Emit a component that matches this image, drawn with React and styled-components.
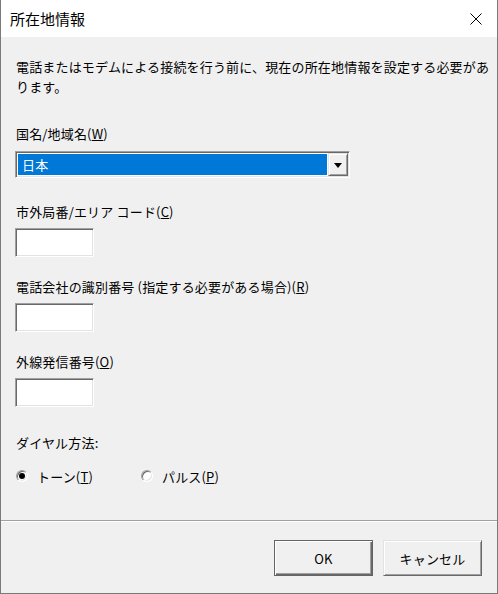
import React from 'react';
import styled, { createGlobalStyle } from 'styled-components';

const GlobalStyle = createGlobalStyle`
  html, body {
    margin: 0;
    padding: 0;
    background: #f0f0f0;
  }
  body {
    font-family: "Noto Sans CJK JP", "Noto Sans", sans-serif;
    font-size: 13px;
    letter-spacing: 0.17px;
    color: #000;
  }
`;

const Window = styled.div`
  width: 498px;
  height: 594px;
  box-sizing: border-box;
  display: flex;
  flex-direction: column;
  background: #f0f0f0;
  border: 1px solid #7a7a7a;
  border-top: none;
`;

const TitleBar = styled.div`
  height: 37px;
  flex-shrink: 0;
  background: #fff;
  display: flex;
  align-items: center;
  justify-content: space-between;
`;

const TitleText = styled.div`
  padding-left: 9px;
  font-size: 15px;
  letter-spacing: 0;
  line-height: 20px;
  margin-top: 1px;
`;

const CloseButton = styled.div`
  width: 42px;
  height: 37px;
  display: flex;
  align-items: center;
  justify-content: center;
  padding-top: 1px;
  box-sizing: border-box;
`;

const Body = styled.div`
  flex: 1;
  padding: 20px 14px 0 14px;
`;

const Message = styled.div`
  line-height: 20px;
  padding-left: 1px;
  white-space: nowrap;
`;

const Section = styled.div`
  margin-top: ${({ $top }) => $top}px;
`;

const Label = styled.div`
  line-height: 20px;
  padding-left: 1px;
  margin-bottom: ${({ $gap }) => $gap}px;
  white-space: nowrap;
`;

const sunken = `
  box-sizing: border-box;
  border: 1px solid;
  border-color: #a0a0a0 #fff #fff #a0a0a0;
  box-shadow: inset 1px 1px 0 #696969, inset -1px -1px 0 #e3e3e3;
  background: #fff;
`;

const ComboBox = styled.div`
  ${sunken}
  width: 335px;
  height: 27px;
  padding: 1px;
  display: flex;
`;

const Selection = styled.div`
  flex: 1;
  margin: 1px;
  background: #0078d7;
  color: #fff;
  line-height: 21px;
  padding-left: 4px;
`;

const DropButton = styled.div`
  width: 20px;
  box-sizing: border-box;
  background: #f0f0f0;
  border: 1px solid;
  border-color: #e3e3e3 #696969 #696969 #e3e3e3;
  box-shadow: inset 1px 1px 0 #fff, inset -1px -1px 0 #a0a0a0;
  display: flex;
  align-items: center;
  justify-content: center;
`;

const Arrow = styled.div`
  width: 0;
  height: 0;
  border-left: 4px solid transparent;
  border-right: 4px solid transparent;
  border-top: 5px solid #000;
  margin-top: 1px;
`;

const TextBox = styled.div`
  ${sunken}
  width: 79px;
  height: 29px;
`;

const RadioRow = styled.div`
  display: flex;
  align-items: center;
  height: 20px;
  padding-left: 1px;
`;

const RadioOption = styled.div`
  width: ${({ $width }) => $width}px;
  display: flex;
  align-items: center;
  gap: 9px;
  white-space: nowrap;
`;

const RadioCircle = styled.span`
  width: 12px;
  height: 12px;
  box-sizing: border-box;
  border-radius: 50%;
  border: 1px solid;
  border-color: #a0a0a0 #fff #fff #a0a0a0;
  box-shadow: inset 1px 1px 0 #696969, inset -1px -1px 0 #e3e3e3;
  background: #fff;
  display: flex;
  align-items: center;
  justify-content: center;
  flex-shrink: 0;

  &::after {
    content: '';
    display: ${({ $checked }) => ($checked ? 'block' : 'none')};
    width: 6px;
    height: 6px;
    border-radius: 50%;
    background: #000;
  }
`;

const Footer = styled.div`
  height: 73px;
  flex-shrink: 0;
  box-sizing: border-box;
  border-top: 1px solid #a0a0a0;
  box-shadow: inset 0 1px 0 #fff;
  display: flex;
  justify-content: flex-end;
  align-items: flex-start;
  padding: 19px 15px 0 0;
  gap: 10px;
`;

const Button = styled.div`
  width: 99px;
  height: 36px;
  box-sizing: border-box;
  background: #f0f0f0;
  display: flex;
  align-items: center;
  justify-content: center;
  border: 1px solid;
  border-color: ${({ $default }) =>
    $default ? '#646464' : '#e3e3e3 #696969 #696969 #e3e3e3'};
  box-shadow: ${({ $default }) =>
    $default
      ? 'inset 1px 1px 0 #fff, inset -1px -1px 0 #696969, inset -2px -2px 0 #a0a0a0'
      : 'inset 1px 1px 0 #fff, inset -1px -1px 0 #a0a0a0'};
`;

const CloseIcon = () => (
  <svg width="12" height="12" viewBox="0 0 12 12">
    <path d="M0.5 0.5 L11.5 11.5 M11.5 0.5 L0.5 11.5" stroke="#000" strokeWidth="1" fill="none" />
  </svg>
);

export default function App() {
  return (
    <>
      <GlobalStyle />
      <Window>
        <TitleBar>
          <TitleText>所在地情報</TitleText>
          <CloseButton>
            <CloseIcon />
          </CloseButton>
        </TitleBar>

        <Body>
          <Message>
            電話またはモデムによる接続を行う前に、現在の所在地情報を設定する必要があ
            <br />
            ります。
          </Message>

          <Section $top={27}>
            <Label $gap={7}>
              国名/地域名(<u>W</u>)
            </Label>
            <ComboBox>
              <Selection>日本</Selection>
              <DropButton>
                <Arrow />
              </DropButton>
            </ComboBox>
          </Section>

          <Section $top={24}>
            <Label $gap={6}>
              市外局番/エリア コード(<u>C</u>)
            </Label>
            <TextBox />
          </Section>

          <Section $top={20}>
            <Label $gap={6}>
              電話会社の識別番号 (指定する必要がある場合)(<u>R</u>)
            </Label>
            <TextBox />
          </Section>

          <Section $top={20}>
            <Label $gap={6}>
              外線発信番号(<u>O</u>)
            </Label>
            <TextBox />
          </Section>

          <Section $top={26}>
            <Label $gap={13}>ダイヤル方法:</Label>
            <RadioRow>
              <RadioOption $width={125}>
                <RadioCircle $checked />
                <span>
                  トーン(<u>T</u>)
                </span>
              </RadioOption>
              <RadioOption $width={120}>
                <RadioCircle />
                <span>
                  パルス(<u>P</u>)
                </span>
              </RadioOption>
            </RadioRow>
          </Section>
        </Body>

        <Footer>
          <Button $default>OK</Button>
          <Button>キャンセル</Button>
        </Footer>
      </Window>
    </>
  );
}
